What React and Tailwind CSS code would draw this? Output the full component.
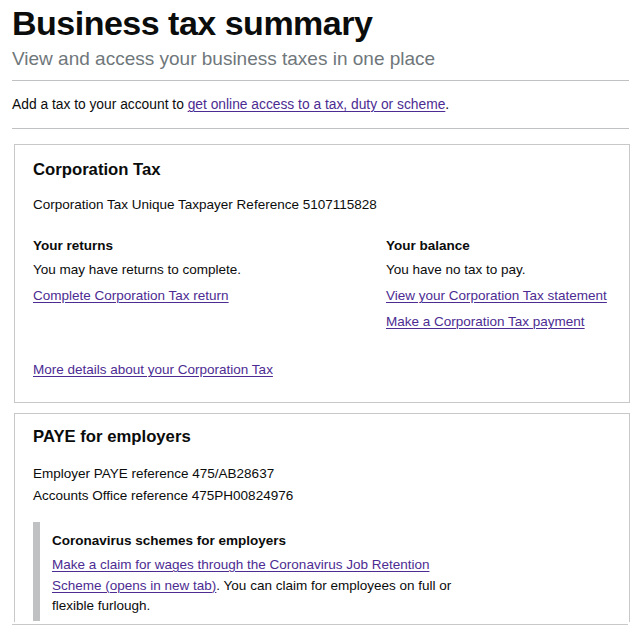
import React from 'react';

const Link = ({ children, className = '' }) => (
    <a href="#" className={`text-[#4c2c92] underline decoration-1 underline-offset-[2px] ${className}`}>
        {children}
    </a>
);

const App = () => {
    return (
        <div className="w-[637px] h-[626px] overflow-hidden bg-white pl-[12px] pr-[8px] text-[#0b0c0c] font-['Liberation_Sans',Arial,sans-serif]">
            <h1 className="pt-[3px] text-[34px] leading-[40px] font-bold tracking-[-0.5px]">Business tax summary</h1>
            <p className="mt-[4px] text-[19px] leading-[24px] text-[#6f777b]">View and access your business taxes in one place</p>
            <hr className="mt-[9px] border-t border-[#bfc1c3]" />
            <p className="mt-[14px] text-[13.8px] leading-[20px]">
                Add a tax to your account to <Link>get online access to a tax, duty or scheme</Link>.
            </p>
            <hr className="mt-[13px] border-t border-[#bfc1c3]" />

            {/* Corporation Tax card */}
            <section className="mt-[15px] ml-[2px] mr-[-1px] border border-[#c8c8c8] pt-[13px] pb-[22px] px-[18px] text-[13.5px] leading-[20px]">
                <h2 className="text-[16.7px] leading-[24px] font-bold">Corporation Tax</h2>
                <p className="mt-[13px]">Corporation Tax Unique Taxpayer Reference 5107115828</p>
                <div className="mt-[21px] grid grid-cols-[353px_1fr]">
                    <div className="flex flex-col items-start">
                        <h3 className="font-bold">Your returns</h3>
                        <p className="mt-[4px]">You may have returns to complete.</p>
                        <Link className="mt-[6px] whitespace-nowrap">Complete Corporation Tax return</Link>
                    </div>
                    <div className="flex flex-col items-start">
                        <h3 className="font-bold">Your balance</h3>
                        <p className="mt-[4px]">You have no tax to pay.</p>
                        <Link className="mt-[6px] whitespace-nowrap">View your Corporation Tax statement</Link>
                        <Link className="mt-[6px] whitespace-nowrap">Make a Corporation Tax payment</Link>
                    </div>
                </div>
                <div className="mt-[28px]">
                    <Link>More details about your Corporation Tax</Link>
                </div>
            </section>

            {/* PAYE card */}
            <section className="mt-[10px] ml-[2px] mr-[-1px] border border-b-0 border-[#c8c8c8] pt-[11px] pb-[1px] px-[18px] text-[13.5px] leading-[20px]">
                <h2 className="text-[16.7px] leading-[24px] font-bold">PAYE for employers</h2>
                <div className="mt-[14px] leading-[22px]">
                    <p>Employer PAYE reference 475/AB28637</p>
                    <p>Accounts Office reference 475PH00824976</p>
                </div>
                <div className="mt-[15px] border-l-[7px] border-[#bfc1c3] pl-[12px] pt-[9px] pb-[4px]">
                    <h3 className="font-bold">Coronavirus schemes for employers</h3>
                    <p className="mt-[4px] w-[415px] leading-[20.5px]">
                        <Link>Make a claim for wages through the Coronavirus Job Retention Scheme (opens in new tab)</Link>. You can claim for employees on full or flexible furlough.
                    </p>
                </div>
            </section>
            <hr className="mt-[2px] mr-[1px] border-t border-[#c8c8c8]" />
        </div>
    );
};

export default App;
